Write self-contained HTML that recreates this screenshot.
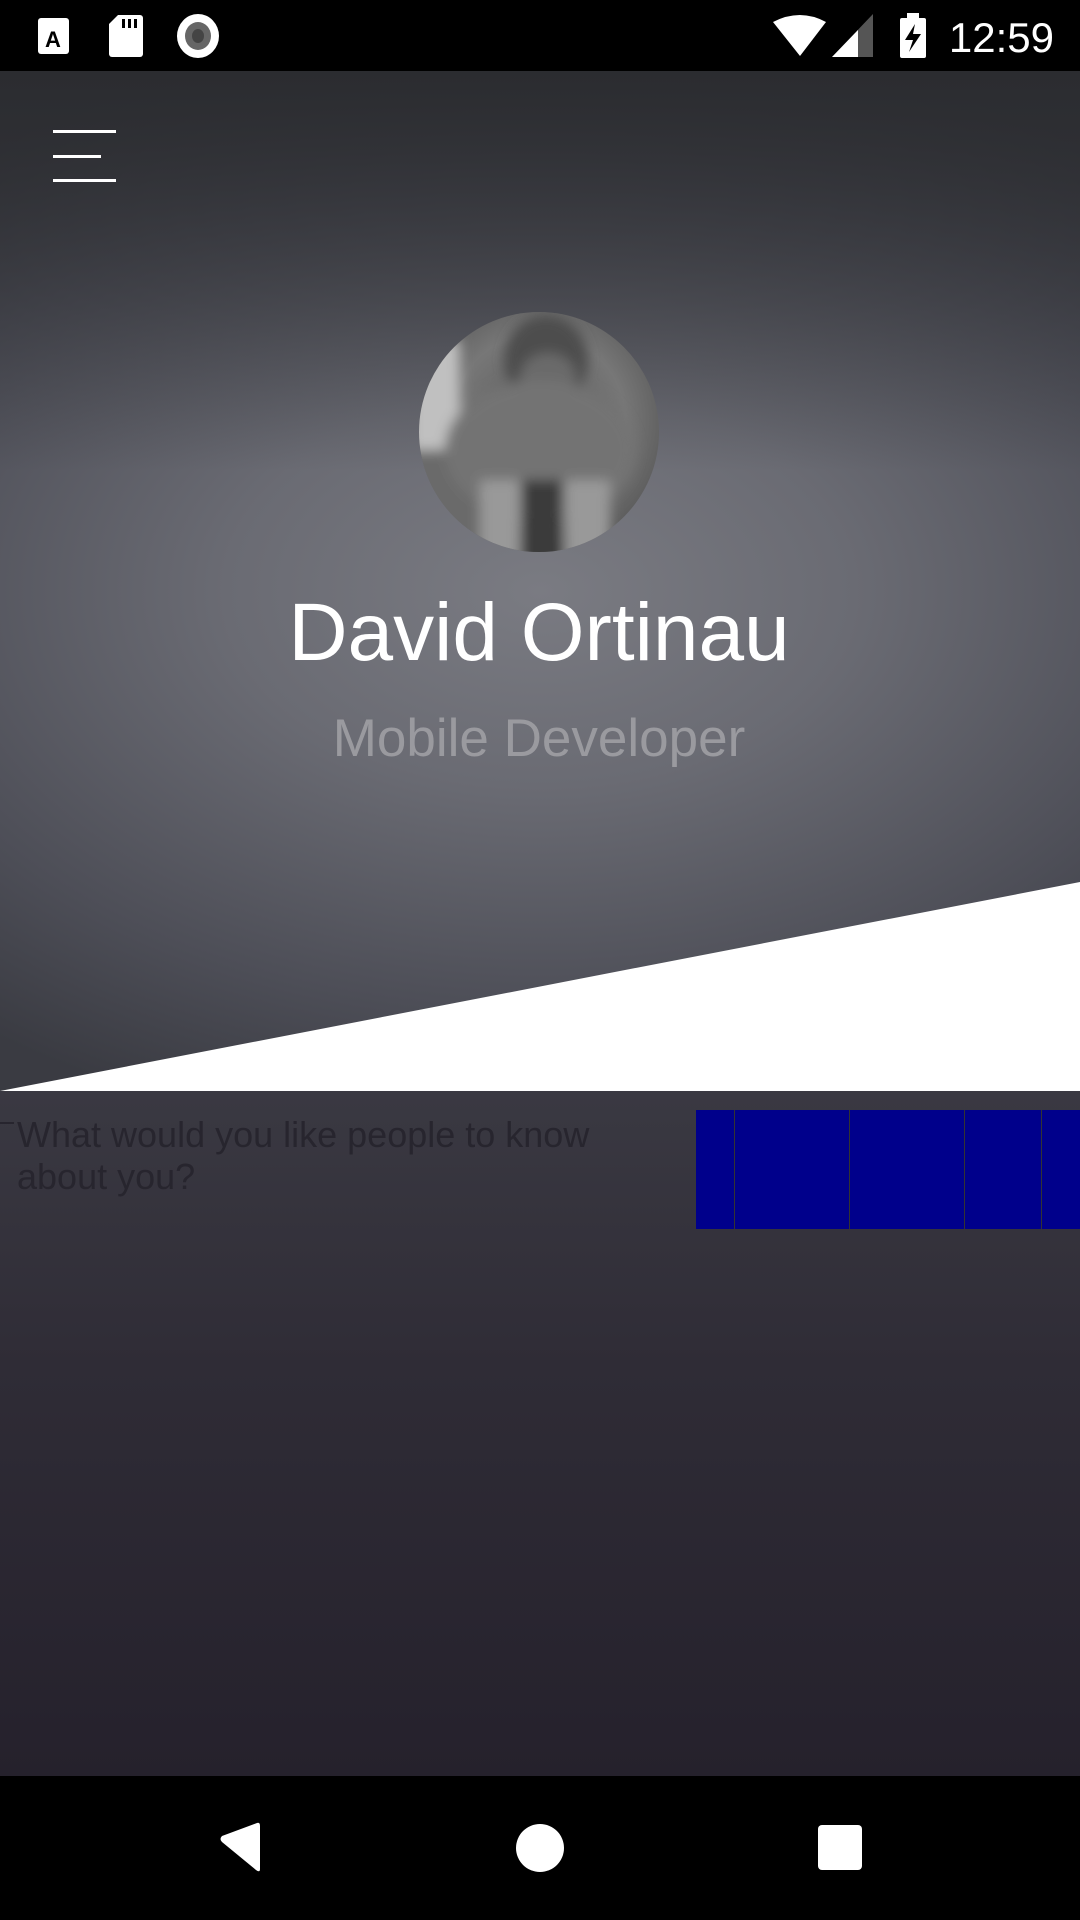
<!DOCTYPE html>
<html><head><meta charset="utf-8"><style>
html,body{margin:0;padding:0;width:1080px;height:1920px;overflow:hidden;background:#000;font-family:"Liberation Sans",sans-serif;}
#top{position:absolute;left:0;top:71px;width:1080px;height:1020px;background:radial-gradient(ellipse 900px 560px at 540px 520px,#7a7b82 0%,#6a6b73 35%,#4d4e57 75%,#3a3b42 100%);}
#top2{position:absolute;left:0;top:71px;width:1080px;height:400px;background:linear-gradient(#2b2c30,rgba(43,44,48,0));}
#bot{position:absolute;left:0;top:1091px;width:1080px;height:685px;background:linear-gradient(#3a3942,#2f2c36 40%,#25212c);}
#nav{position:absolute;left:0;top:1776px;width:1080px;height:144px;background:#000;}
.hl{position:absolute;left:53px;height:3px;background:#fff;}
</style></head><body>
<div id="top"></div><div id="top2"></div>
<svg style="position:absolute;left:0;top:0" width="1080" height="1920">
<polygon points="0,1091 1080,882 1080,1091" fill="#fff"/>
<rect x="38" y="18" width="31" height="36" rx="3" fill="#fff"/>
<text x="53" y="47" font-size="22" font-weight="bold" text-anchor="middle" fill="#000" font-family="Liberation Sans">A</text>
<rect x="109" y="15" width="34" height="42" rx="3" fill="#fff"/>
<polygon points="109,15 118,15 109,24" fill="#000"/>
<rect x="122" y="19" width="3" height="9" fill="#000"/><rect x="128" y="19" width="3" height="9" fill="#000"/><rect x="134" y="19" width="3" height="9" fill="#000"/>
<ellipse cx="198" cy="36" rx="21" ry="22" fill="#fff"/>
<ellipse cx="198" cy="36" rx="13" ry="14" fill="#666"/>
<ellipse cx="198" cy="36" rx="6" ry="7" fill="#444"/>
<path d="M773,22 Q800,8 826,22 L800,56 Z" fill="#fff"/>
<polygon points="832,57 873,14 873,57" fill="#555"/>
<polygon points="832,57 858,30 858,57" fill="#fff"/>
<rect x="900" y="18" width="26" height="40" rx="2" fill="#fff"/><rect x="907" y="13" width="12" height="6" fill="#fff"/>
<polygon points="915,24 905,40 913,40 909,52 921,34 913,34" fill="#000"/>
<text x="1054" y="52" font-size="42" fill="#fff" text-anchor="end" font-family="Liberation Sans">12:59</text>
<defs><clipPath id="c"><circle cx="539" cy="432" r="120"/></clipPath>
<radialGradient id="g" cx="0.5" cy="0.45" r="0.6"><stop offset="0" stop-color="#5a5a5a"/><stop offset="0.6" stop-color="#777"/><stop offset="1" stop-color="#555"/></radialGradient>
<filter id="b"><feGaussianBlur stdDeviation="6"/></filter></defs>
<g clip-path="url(#c)">
<rect x="419" y="312" width="240" height="240" fill="url(#g)"/>
<g filter="url(#b)">
<rect x="410" y="340" width="50" height="140" fill="#c0c0c0"/>
<rect x="410" y="450" width="70" height="112" fill="#6a6a6a"/>
<ellipse cx="546" cy="360" rx="42" ry="45" fill="#4e4e4e"/>
<ellipse cx="548" cy="378" rx="28" ry="25" fill="#6a6a6a"/>
<ellipse cx="540" cy="450" rx="95" ry="70" fill="#737373"/>
<rect x="480" y="480" width="40" height="90" fill="#999"/>
<rect x="565" y="480" width="45" height="90" fill="#999"/>
<rect x="522" y="480" width="40" height="90" fill="#3a3a3a"/>
</g>
</g>
<text x="539" y="660" font-size="82" fill="#fff" text-anchor="middle" font-family="Liberation Sans">David Ortinau</text>
<text x="539" y="756" font-size="53" fill="#9a9a9f" text-anchor="middle" font-family="Liberation Sans">Mobile Developer</text>
</svg>
<div class="hl" style="top:130px;width:63px"></div>
<div class="hl" style="top:155px;width:48px"></div>
<div class="hl" style="top:179px;width:63px"></div>
<div id="bot"></div>
<div style="position:absolute;left:0;top:1122px;width:14px;height:2px;background:#27252e"></div>
<div style="position:absolute;left:17px;top:1114px;width:660px;font-size:36px;line-height:42px;color:#27252e">What would you like people to know about you?</div>
<div style="position:absolute;left:696px;top:1110px;width:384px;height:119px;background:#00008b"></div>
<div style="position:absolute;left:734px;top:1110px;width:1px;height:119px;background:#333"></div>
<div style="position:absolute;left:849px;top:1110px;width:1px;height:119px;background:#333"></div>
<div style="position:absolute;left:964px;top:1110px;width:1px;height:119px;background:#333"></div>
<div style="position:absolute;left:1041px;top:1110px;width:1px;height:119px;background:#333"></div>
<div id="nav"></div>
<svg style="position:absolute;left:0;top:1776px" width="1080" height="144">
<path d="M257,47 Q260,46 260,50 L260,93 Q260,97 256,94 L222,66 Q219,63 222,60 Z" fill="#fff"/>
<circle cx="540" cy="72" r="24" fill="#fff"/>
<rect x="818" y="49" width="44" height="45" rx="4" fill="#fff"/>
</svg>
</body></html>
